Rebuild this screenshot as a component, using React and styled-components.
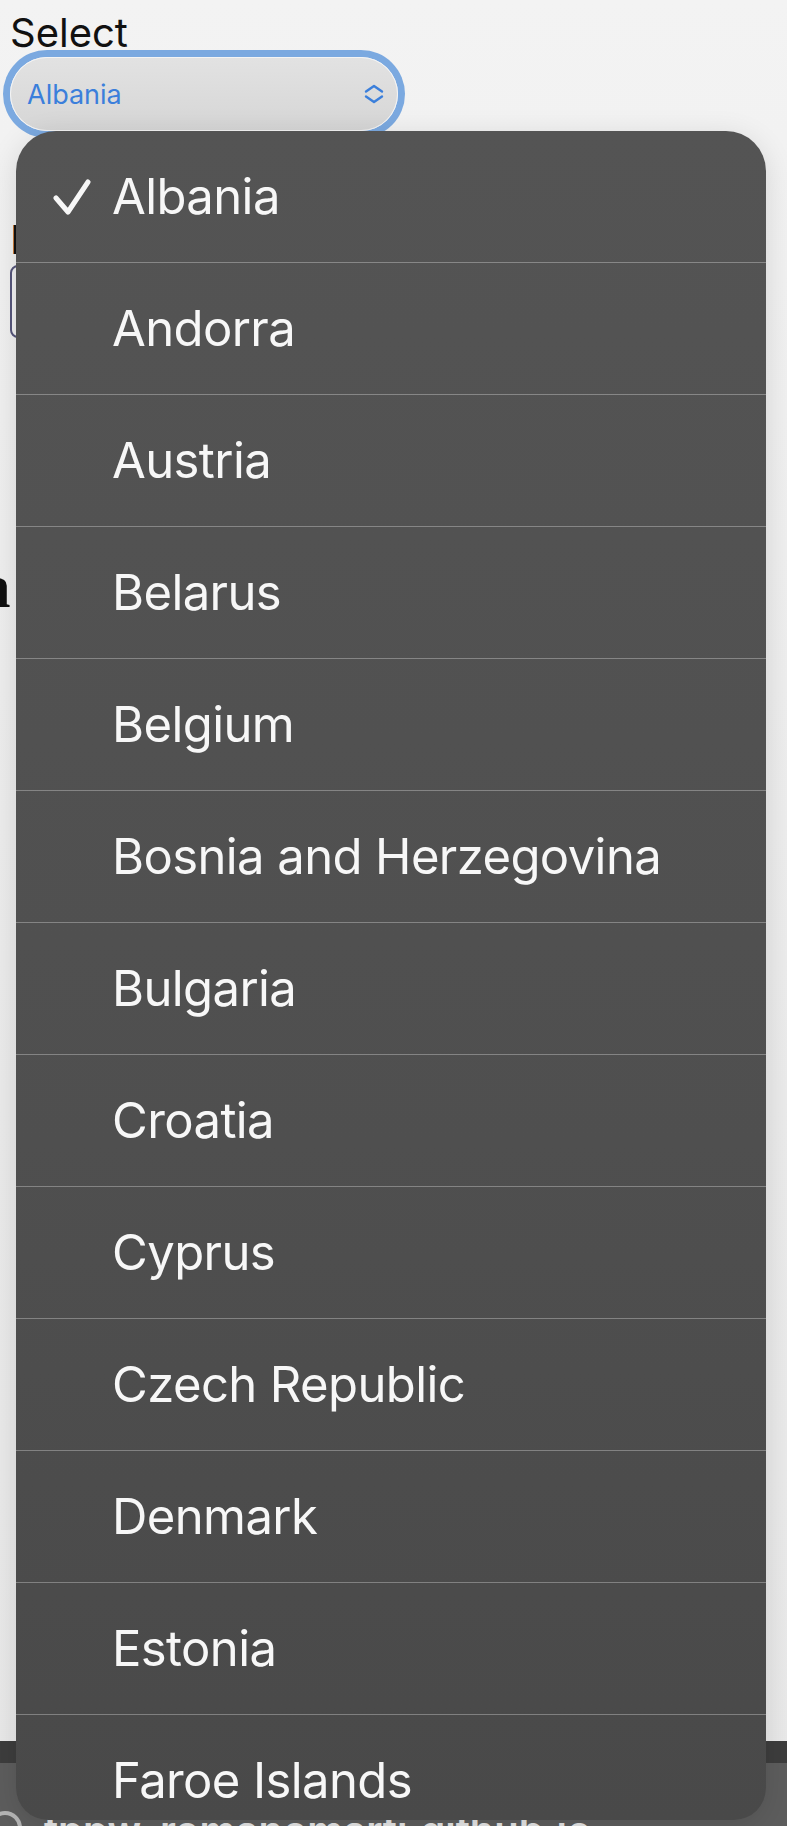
import React from "react";
import styled, { createGlobalStyle } from "styled-components";

const countries = [
  "Albania",
  "Andorra",
  "Austria",
  "Belarus",
  "Belgium",
  "Bosnia and Herzegovina",
  "Bulgaria",
  "Croatia",
  "Cyprus",
  "Czech Republic",
  "Denmark",
  "Estonia",
  "Faroe Islands",
  "Finland",
];

const GlobalStyle = createGlobalStyle`
  html, body {
    margin: 0;
    padding: 0;
  }
  body {
    background: #ececec;
    font-family: Inter, "Noto Sans", sans-serif;
  }
`;

const Page = styled.div`
  position: relative;
  height: 1826px;
  overflow: hidden;
  display: flex;
  flex-direction: column;
  background: linear-gradient(180deg, #f3f3f3 0%, #ebebeb 60%, #e9e9e9 100%);
`;

const Form = styled.div`
  padding: 8px 0 0 10px;
  flex: 1;
`;

const Label = styled.div`
  font-size: 40px;
  line-height: 49px;
  color: #111;
  margin-top: ${(p) => p.$top || 0}px;
`;

const SelectPill = styled.div`
  width: 388px;
  height: 74px;
  box-sizing: border-box;
  border-radius: 37px;
  border: 1.5px solid #f4f4f4;
  background: linear-gradient(180deg, #e2e2e2 0%, #d6d6d6 100%);
  box-shadow: 0 0 0 7px #7ba9e0;
  display: flex;
  align-items: center;
  justify-content: space-between;
  padding: 0 13px 0 16px;
  color: #3b7fdb;
  font-size: 27px;
`;

const TextBox = styled.div`
  margin-top: 1px;
  width: 300px;
  height: 73px;
  box-sizing: border-box;
  border: 2px solid #55557a;
  border-radius: 8px;
  background: #f1f1f1;
`;

const Heading = styled.h2`
  margin: 214px 0 0 -30px;
  font-family: "Liberation Serif", serif;
  font-weight: 700;
  font-size: 61px;
  line-height: 70px;
  color: #111;
`;

const BottomBar = styled.div`
  flex: none;
  display: flex;
  flex-direction: column;
`;

const DarkStrip = styled.div`
  height: 22px;
  background: #3d3d3d;
`;

const UrlBar = styled.div`
  height: 63px;
  background: #5d5d5d;
  overflow: hidden;
  display: flex;
  align-items: flex-start;
  padding-top: 48px;
  box-sizing: border-box;
  gap: 22px;
`;

const SearchRing = styled.div`
  width: 26px;
  height: 26px;
  margin-left: -12px;
  border: 4px solid #b5b5b5;
  border-radius: 50%;
  flex: none;
`;

const UrlText = styled.div`
  font-size: 40px;
  line-height: 40px;
  color: #e6e6e6;
  font-weight: 600;
  white-space: nowrap;
`;

const Menu = styled.div`
  position: absolute;
  top: 131px;
  left: 16px;
  width: 750px;
  height: 1689px;
  border-radius: 40px 40px 32px 32px;
  overflow: hidden;
  background: linear-gradient(180deg, #545454 0%, #4f4f4f 60%, #494949 100%);
  box-shadow: 0 6px 30px rgba(0, 0, 0, 0.12);
`;

const Option = styled.div`
  height: 131px;
  border-bottom: 1px solid rgba(255, 255, 255, 0.3);
  display: flex;
  align-items: center;
  color: #f7f7f7;
  font-size: 49px;
  letter-spacing: -0.6px;
`;

const CheckSlot = styled.div`
  width: 96px;
  flex: none;
  display: flex;
  justify-content: flex-end;
  padding-right: 21px;
  box-sizing: border-box;
`;

const Check = () => (
  <svg width="40" height="38" viewBox="0 0 40 38">
    <path
      d="M5 20 L17 34 L37 4"
      fill="none"
      stroke="#f7f7f7"
      strokeWidth="5"
      strokeLinecap="round"
      strokeLinejoin="round"
    />
  </svg>
);

const UpDown = () => (
  <svg width="20" height="20" viewBox="0 0 20 20">
    <path
      d="M2 7.5 L10 2 L18 7.5 M2 12.5 L10 18 L18 12.5"
      fill="none"
      stroke="#3b7fdb"
      strokeWidth="2.4"
      strokeLinecap="round"
      strokeLinejoin="round"
    />
  </svg>
);

export default function App() {
  const selected = "Albania";
  return (
    <>
      <GlobalStyle />
      <Page>
        <Form>
          <Label>Select</Label>
          <SelectPill>
            <span>{selected}</span>
            <UpDown />
          </SelectPill>
          <Label $top={84}>Description</Label>
          <TextBox />
          <Heading>a</Heading>
        </Form>
        <BottomBar>
          <DarkStrip />
          <UrlBar>
            <SearchRing />
            <UrlText>tppw. romanomarti.github.io</UrlText>
          </UrlBar>
        </BottomBar>
        <Menu>
          {countries.map((name) => (
            <Option key={name}>
              <CheckSlot>{name === selected && <Check />}</CheckSlot>
              {name}
            </Option>
          ))}
        </Menu>
      </Page>
    </>
  );
}
